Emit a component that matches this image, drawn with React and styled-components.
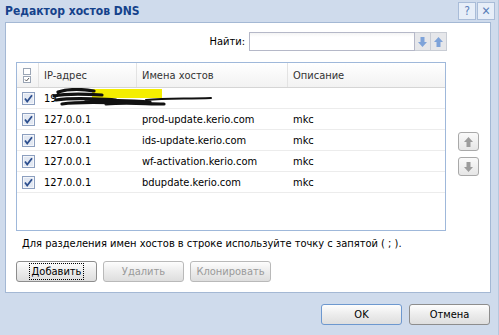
import React from 'react';
import styled, {createGlobalStyle} from 'styled-components';

const GlobalStyle = createGlobalStyle`
    body{
        margin: 0;
        font-family: "DejaVu Sans Condensed", "DejaVu Sans", sans-serif;
        font-size: 11px;
        color: #000;
    }
`;

const rows = [
    {ip: '19', host: '', desc: '', hidden: true},
    {ip: '127.0.0.1', host: 'prod-update.kerio.com', desc: 'mkc'},
    {ip: '127.0.0.1', host: 'ids-update.kerio.com', desc: 'mkc'},
    {ip: '127.0.0.1', host: 'wf-activation.kerio.com', desc: 'mkc'},
    {ip: '127.0.0.1', host: 'bdupdate.kerio.com', desc: 'mkc'},
];

//Small block arrow used on the search and move buttons
const Arrow = ({dir, color}) => (
    <svg width="9" height="10" viewBox="0 0 9 10">
        <path
            d={dir === 'up'
                ? 'M4.5 0 L9 5 L6.5 5 L6.5 10 L2.5 10 L2.5 5 L0 5 Z'
                : 'M4.5 10 L9 5 L6.5 5 L6.5 0 L2.5 0 L2.5 5 L0 5 Z'}
            fill={color}
        />
    </svg>
);

const Check = () => (
    <svg width="13" height="13" viewBox="0 0 13 13">
        <rect x="0.5" y="0.5" width="12" height="12" fill="#f4f6fa" stroke="#8c9fbf" />
        <rect x="2" y="2" width="9" height="9" fill="#e2e8f2" />
        <path d="M3 6.5 L5.2 9.5 L10 3.2" fill="none" stroke="#2d4f8e" strokeWidth="1.8" />
    </svg>
);

const HeaderCheck = () => (
    <svg width="9" height="15" viewBox="0 0 9 15">
        <rect x="0.5" y="0.5" width="7" height="6" fill="#fff" stroke="#9aa5b5" />
        <rect x="0.5" y="8.5" width="7" height="6" fill="#fff" stroke="#9aa5b5" />
        <path d="M2 11.5 L3.5 13 L6 10" fill="none" stroke="#555" strokeWidth="1" />
    </svg>
);

//Scribble that hides the first address
const Scribble = () => (
    <svg width="170" height="20" viewBox="0 0 170 20">
        <path d="M46 1 L116 1 L116 10 L46 10 Z" fill="#f4ee00" />
        <path
            d="M12 4 C22 1 36 1 48 3 M8 8 C22 5 40 6 56 7 M10 12 C30 9 50 11 70 12 M16 16 C36 13 60 15 86 15 M40 13 C60 11 80 13 104 14 M60 16 C80 14 100 16 118 16"
            fill="none" stroke="#111" strokeWidth="3.2" strokeLinecap="round"
        />
        <path
            d="M100 12 C120 10 140 11 165 10"
            fill="none" stroke="#111" strokeWidth="2" strokeLinecap="round"
        />
    </svg>
);

const App = () => {
    return(
        <>
        <GlobalStyle />
        <Window>
            <TitleBar>
                <Title>Редактор хостов DNS</Title>
                <Tools>
                    <ToolButton>?</ToolButton>
                    <ToolButton>✕</ToolButton>
                </Tools>
            </TitleBar>
            <Panel>
                <Main>
                    <SearchRow>
                        <label>Найти:</label>
                        <SearchInput />
                        <SearchButton><Arrow dir="down" color="#7ea3d9" /></SearchButton>
                        <SearchButton><Arrow dir="up" color="#7ea3d9" /></SearchButton>
                    </SearchRow>
                    <Grid>
                        <HeaderRow>
                            <CheckCell><HeaderCheck /></CheckCell>
                            <Cell width={98} header>IP-адрес</Cell>
                            <Cell width={151} header>Имена хостов</Cell>
                            <Cell header last>Описание</Cell>
                        </HeaderRow>
                        {rows.map( (row, i) => (
                            <Row key={i}>
                                <CheckCell><Check /></CheckCell>
                                <Cell width={98}>{row.ip}</Cell>
                                <Cell width={151}>{row.host}</Cell>
                                <Cell last>{row.desc}</Cell>
                                {row.hidden && <Overlay><Scribble /></Overlay>}
                            </Row>
                        ))}
                    </Grid>
                    <Hint>Для разделения имен хостов в строке используйте точку с запятой ( ; ).</Hint>
                    <ButtonRow>
                        <Button><Focus>Добавить</Focus></Button>
                        <Button disabled>Удалить</Button>
                        <Button disabled>Клонировать</Button>
                    </ButtonRow>
                </Main>
                <SideButtons>
                    <MoveButton><Arrow dir="up" color="#9c9c9c" /></MoveButton>
                    <MoveButton><Arrow dir="down" color="#9c9c9c" /></MoveButton>
                </SideButtons>
            </Panel>
            <Footer>
                <Button primary>OK</Button>
                <Button>Отмена</Button>
            </Footer>
        </Window>
        </>
    );
}

const Window = styled.div`
    width: 499px;
    height: 335px;
    background: #cfdbec;
    display: flex;
    flex-direction: column;
    box-sizing: border-box;
    border-right: 1px solid #b7c7dd;
`;

const TitleBar = styled.div`
    height: 22px;
    display: flex;
    align-items: center;
    justify-content: space-between;
    padding: 0 3px 0 5px;
`;

const Title = styled.div`
    font-weight: bold;
    font-size: 12px;
    color: #15428b;
`;

const Tools = styled.div`
    display: flex;
    gap: 1px;
`;

const ToolButton = styled.div`
    width: 16px;
    height: 16px;
    border: 1px solid #a9bcd8;
    background: #e7eef8;
    color: #5a7fb8;
    font-size: 12px;
    display: flex;
    align-items: center;
    justify-content: center;
`;

const Panel = styled.div`
    margin-left: 5px;
    width: 486px;
    height: 271px;
    box-sizing: border-box;
    background: #fff;
    border: 1px solid #a4b8d4;
    padding: 8px 0 0 10px;
    display: flex;
`;

const Main = styled.div`
    width: 431px;
    display: flex;
    flex-direction: column;
`;

const SearchRow = styled.div`
    height: 21px;
    display: flex;
    align-items: center;
    justify-content: flex-end;
    label{
        margin-right: 4px;
        font-size: 11px;
    }
`;

const SearchInput = styled.div`
    width: 166px;
    height: 19px;
    box-sizing: border-box;
    border: 1px solid #b5b8c8;
    background: linear-gradient(#f4f4f4, #fff 4px);
`;

const SearchButton = styled.div`
    width: 16px;
    height: 19px;
    box-sizing: border-box;
    border: 1px solid #c8ccd4;
    border-left: none;
    background: #e6e7ea;
    display: flex;
    align-items: center;
    justify-content: center;
`;

const Grid = styled.div`
    margin-top: 10px;
    width: 430px;
    height: 169px;
    box-sizing: border-box;
    border: 1px solid #9fb8da;
    display: flex;
    flex-direction: column;
`;

const HeaderRow = styled.div`
    height: 24px;
    display: flex;
    border-bottom: 1px solid #d5d5d5;
    background: linear-gradient(#fff, #f2f2f2);
    color: #333;
`;

const Row = styled.div`
    position: relative;
    height: 20px;
    display: flex;
    border-bottom: 1px solid #ececec;
`;

const CheckCell = styled.div`
    width: 22px;
    display: flex;
    align-items: center;
    justify-content: center;
    border-right: 1px solid #e3e3e3;
    box-sizing: border-box;
    ${Row} &{
        border-right: none;
    }
`;

const Cell = styled.div`
    ${p => p.width ? `width: ${p.width}px;` : 'flex: 1;'}
    box-sizing: border-box;
    padding-left: 5px;
    display: flex;
    align-items: center;
    white-space: nowrap;
    overflow: hidden;
    border-right: ${p => p.header && !p.last ? '1px solid #e3e3e3' : 'none'};
`;

const Overlay = styled.div`
    position: absolute;
    left: 29px;
    top: 0;
`;

const Hint = styled.div`
    margin-top: 6px;
    padding-left: 6px;
    line-height: 14px;
`;

const ButtonRow = styled.div`
    margin-top: 10px;
    display: flex;
    gap: 6px;
`;

const Button = styled.div`
    width: 81px;
    height: 21px;
    box-sizing: border-box;
    border: 1px solid ${p => p.primary ? '#6d98cf' : p.disabled ? '#b9b9b9' : '#8d8d8d'};
    border-radius: 3px;
    background: linear-gradient(#fdfdfd, #ececec 50%, #dedede);
    color: ${p => p.disabled ? '#9a9a9a' : '#000'};
    display: flex;
    align-items: center;
    justify-content: center;
`;

const Focus = styled.span`
    outline: 1px dotted #000;
    padding: 0 2px;
    line-height: 15px;
`;

const SideButtons = styled.div`
    margin-left: 11px;
    padding-top: 101px;
    display: flex;
    flex-direction: column;
    gap: 6px;
`;

const MoveButton = styled.div`
    width: 21px;
    height: 19px;
    box-sizing: border-box;
    border: 1px solid #a9a9a9;
    border-radius: 3px;
    background: linear-gradient(#fafafa, #e6e6e6);
    display: flex;
    align-items: center;
    justify-content: center;
`;

const Footer = styled.div`
    flex: 1;
    display: flex;
    justify-content: flex-end;
    align-items: flex-start;
    gap: 7px;
    padding: 11px 8px 0 0;
`;

export default App;
